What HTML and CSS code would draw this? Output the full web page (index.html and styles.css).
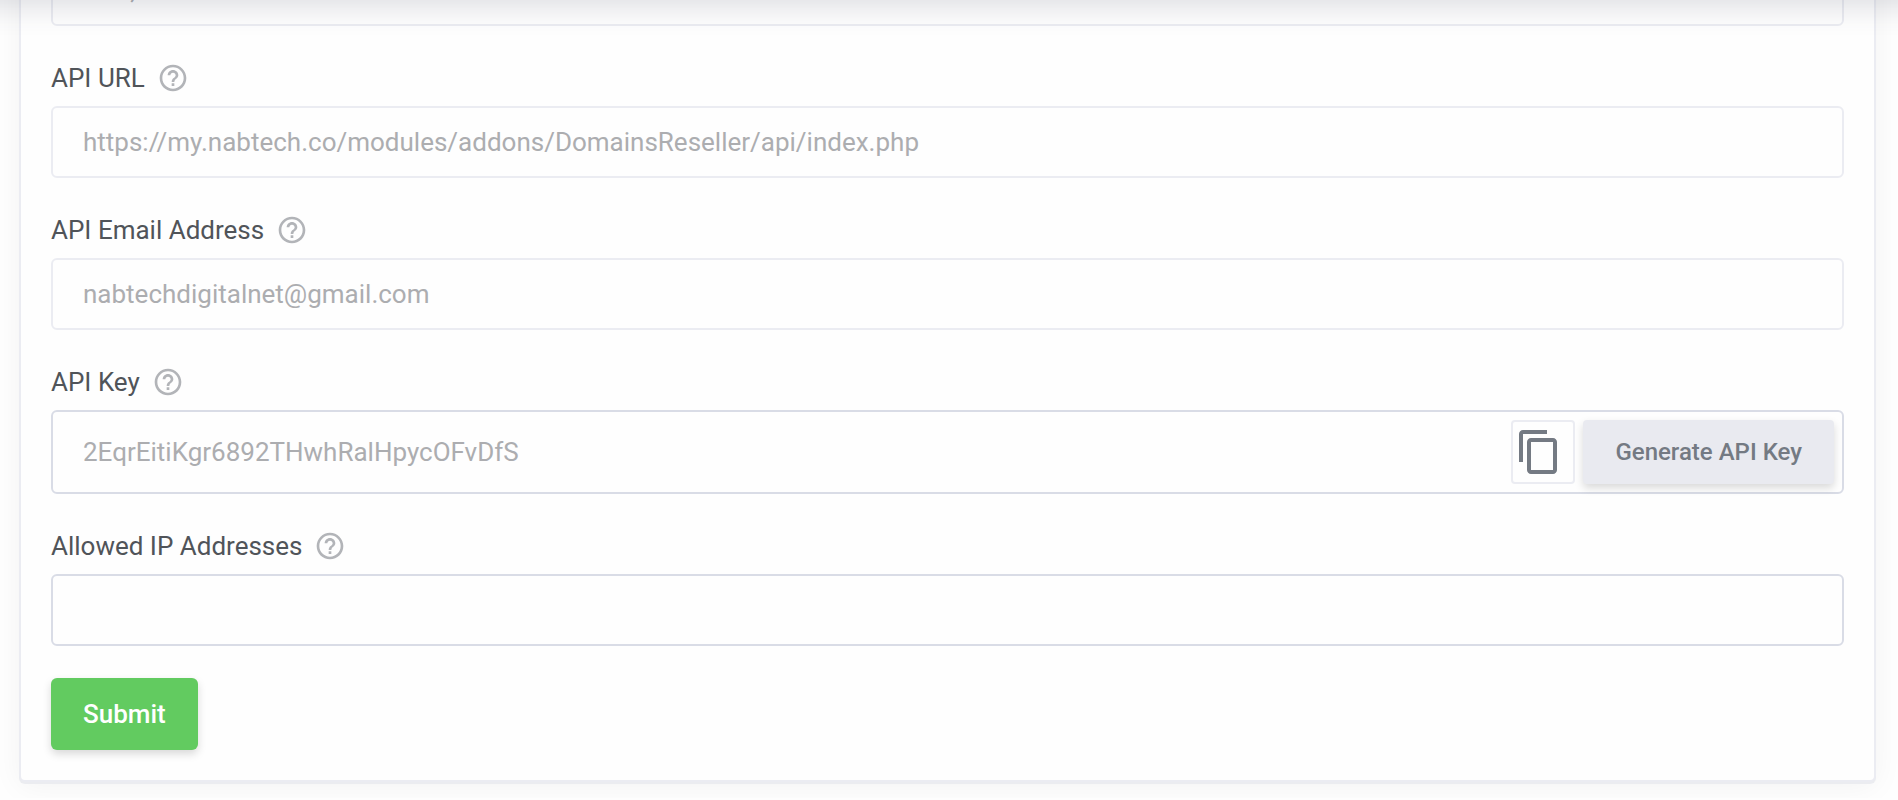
FILE: index.html
```html
<!DOCTYPE html>
<html lang="en">
<head>
    <meta charset="UTF-8">
    <meta name="viewport" content="width=device-width, initial-scale=1.0">
    <title>API Settings</title>
    <link rel="stylesheet" href="styles.css">
</head>
<body>
    <svg class="sprite" aria-hidden="true">
        <symbol id="icon-help" viewBox="0 0 24 24">
            <path d="M11 18h2v-2h-2v2zm1-16C6.480 2 2 6.480 2 12s4.480 10 10 10 10-4.480 10-10S17.520 2 12 2zm0 18c-4.410 0-8-3.590-8-8s3.590-8 8-8 8 3.590 8 8-3.590 8-8 8zm0-14c-2.210 0-4 1.790-4 4h2c0-1.100.9-2 2-2s2 .9 2 2c0 2-3 1.750-3 5h2c0-2.250 3-2.500 3-5 0-2.210-1.790-4-4-4z"/>
        </symbol>
        <symbol id="icon-copy" viewBox="0 0 24 24">
            <path d="M16 1H4c-1.100 0-2 .9-2 2v14h2V3h12V1zm3 4H8c-1.100 0-2 .9-2 2v14c0 1.100.9 2 2 2h11c1.100 0 2-.9 2-2V7c0-1.100-.9-2-2-2zm0 16H8V7h11v14z"/>
        </symbol>
    </svg>

    <div class="topbar"></div>

    <main class="content">
        <form class="panel">
            <div class="field">
                <input class="form-control" type="text" value="Nab," aria-label="Name" disabled>
            </div>

            <div class="field">
                <div class="field-label">
                    <label for="apiUrl">API URL</label>
                    <svg class="help"><use href="#icon-help"/></svg>
                </div>
                <input class="form-control" type="text" id="apiUrl" value="https://my.nabtech.co/modules/addons/DomainsReseller/api/index.php" disabled>
            </div>

            <div class="field">
                <div class="field-label">
                    <label for="apiEmail">API Email Address</label>
                    <svg class="help"><use href="#icon-help"/></svg>
                </div>
                <input class="form-control" type="text" id="apiEmail" value="nabtechdigitalnet@gmail.com" disabled>
            </div>

            <div class="field">
                <div class="field-label">
                    <label for="apiKey">API Key</label>
                    <svg class="help"><use href="#icon-help"/></svg>
                </div>
                <div class="input-group">
                    <input class="group-input" type="text" id="apiKey" value="2EqrEitiKgr6892THwhRalHpycOFvDfS" readonly>
                    <button class="btn-copy" type="button" aria-label="Copy"><svg><use href="#icon-copy"/></svg></button>
                    <button class="btn btn-default" type="button">Generate API Key</button>
                </div>
            </div>

            <div class="field">
                <div class="field-label">
                    <label for="allowedIps">Allowed IP Addresses</label>
                    <svg class="help"><use href="#icon-help"/></svg>
                </div>
                <input class="form-control" type="text" id="allowedIps">
            </div>

            <button class="btn btn-submit" type="submit">Submit</button>
        </form>
    </main>
</body>
</html>
```

FILE: styles.css
```css
* {
    margin: 0;
    padding: 0;
    box-sizing: border-box;
}

body {
    background-color: #fefefe;
    color: #505459;
    font-family: Roboto, sans-serif;
    font-size: 26px;
    line-height: 40px;
    overflow-x: hidden;
}

input, button {
    font-family: inherit;
}

.sprite {
    display: none;
}

/* sits above the scrolled content, only its shadow shows */
.topbar {
    position: fixed;
    top: -80px;
    left: -40px;
    right: -40px;
    height: 80px;
    box-shadow: 0 4px 32px rgba(58, 65, 90, 0.2);
    z-index: 10;
}

.content {
    margin-top: -78px;
    padding: 0 22px 16px 19px;
}

.panel {
    padding: 30px;
    background-color: #fefefe;
    border: 2px solid #ebecf2;
    border-radius: 6px;
    box-shadow: 0 2px 0 #ebecf0, 0 4px 30px rgba(0, 0, 0, 0.05);
}

.field {
    margin-bottom: 32px;
}

.field-label {
    display: flex;
    align-items: center;
    gap: 12px;
    margin-bottom: 8px;
}

.help {
    width: 32px;
    height: 32px;
    fill: #b2b4b8;
}

.form-control {
    display: block;
    width: 100%;
    height: 72px;
    padding: 0 30px;
    border: 2px solid #d9dce6;
    border-radius: 6px;
    background-color: #fefefe;
    color: #505459;
    font-size: 26px;
}

.form-control:disabled {
    border-color: #ebecf2;
    color: #acadb0;
}

.input-group {
    display: flex;
    gap: 8px;
    padding: 8px;
    border: 2px solid #d9dce6;
    border-radius: 6px;
}

.group-input {
    flex: 1;
    min-width: 0;
    padding: 0 22px;
    border: none;
    outline: none;
    background-color: transparent;
    color: #acadb0;
    font-size: 26px;
}

.btn-copy {
    display: flex;
    align-items: center;
    width: 64px;
    height: 64px;
    padding-left: 2px;
    border: 2px solid #ebecf2;
    border-radius: 4px;
    background-color: #fefefe;
    cursor: pointer;
}

.btn-copy svg {
    width: 48px;
    height: 48px;
    fill: #747a83;
}

.btn {
    padding: 0 32px;
    border: none;
    border-radius: 6px;
    box-shadow: 0 4px 8px rgba(0, 0, 0, 0.15);
    font-weight: 500;
    cursor: pointer;
}

.btn-default {
    height: 64px;
    border-radius: 4px;
    background-color: #e9eaf0;
    color: #747a83;
    font-size: 24px;
}

.btn-submit {
    display: block;
    height: 72px;
    background-color: #62cb60;
    color: #fff;
    font-size: 26px;
}
```
